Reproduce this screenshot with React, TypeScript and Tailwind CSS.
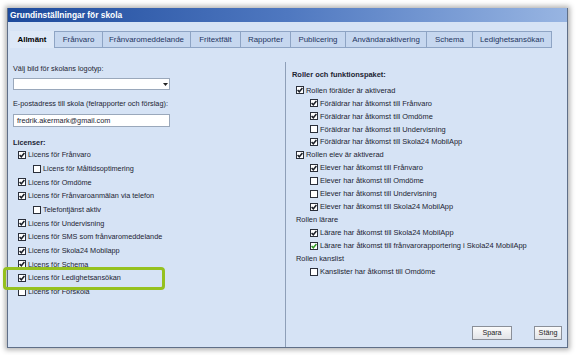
import React from "react";

const Box = ({ checked, green }: { checked: boolean; green?: boolean }) => (
  <span className="inline-flex w-[8px] h-[8px] shrink-0 border border-[#2a2f3a] bg-white items-center justify-center">
    {checked && (
      <svg width="6" height="6" viewBox="0 0 6 6">
        <path d="M0.6 3 L2.3 4.8 L5.4 1" fill="none" stroke={green ? "#2f9a28" : "#1b1f28"} strokeWidth="1.5" />
      </svg>
    )}
  </span>
);

const Row = ({
  label,
  checked,
  green,
  pad,
  h,
  box = true,
}: {
  label: string;
  checked?: boolean;
  green?: boolean;
  pad: string;
  h: string;
  box?: boolean;
}) => (
  <div className={`flex items-center gap-[2px] ${pad} ${h}`}>
    {box && <Box checked={!!checked} green={green} />}
    <span className="whitespace-nowrap leading-none">{label}</span>
  </div>
);

const tabs: [string, number][] = [
  ["Allmänt", 45],
  ["Frånvaro", 48],
  ["Frånvaromeddelande", 88],
  ["Fritextfält", 50],
  ["Rapporter", 50],
  ["Publicering", 55],
  ["Användaraktivering", 81],
  ["Schema", 46],
  ["Ledighetsansökan", 79],
];

export default function App() {
  const L = "h-[13.7px]";
  const R = "h-[12.95px]";
  return (
    <div
      className="relative w-[578px] h-[355px] bg-white overflow-hidden text-[#1c2433]"
      style={{ fontFamily: "'Liberation Sans', Arial, sans-serif" }}
    >
      <div className="ml-[7px] mt-[8px] w-[561px] h-[340px] border-x border-b border-[#5f6f88] bg-[#d6e3f5] flex flex-col shadow-[0_0_5px_2px_rgba(0,0,0,0.3)]">
        <div className="h-[14px] bg-gradient-to-r from-[#1d4a9c] via-[#4f78c0] to-[#98b5e2] flex items-center pl-[2px]">
          <span className="text-white font-bold text-[8.4px] leading-none">Grundinställningar för skola</span>
        </div>
        <div className="flex mt-[9px] ml-[2px] h-[17px] text-[7.9px]">
          {tabs.map(([t, w], i) => (
            <div
              key={t}
              style={{ width: w }}
              className={
                i === 0
                  ? "flex items-center justify-center border-r border-[#8ea4c4] bg-[#dde8f7] font-bold text-black"
                  : "flex items-center justify-center border-r border-y border-[#8ea4c4] bg-[#c6d7ef] text-[#1f3560]"
              }
            >
              {t}
            </div>
          ))}
        </div>
        <div className="flex mt-[14px] flex-1">
          <div className="w-[277px] pl-[5px] pt-[2px] text-[7.3px]">
            <div className="h-[10px] flex items-center leading-none">Välj bild för skolans logotyp:</div>
            <div className="mt-[4px] w-[157px] h-[12px] bg-white border border-[#9aa8bb] flex justify-end">
              <div className="w-[8px] h-full flex items-center justify-center">
                <svg width="5" height="3" viewBox="0 0 5 3">
                  <path d="M0 0 H5 L2.5 3 Z" fill="#222" />
                </svg>
              </div>
            </div>
            <div className="mt-[9px] h-[10px] flex items-center leading-none">
              E-postadress till skola (felrapporter och förslag):
            </div>
            <div className="mt-[5px] w-[157px] h-[13px] bg-white border border-[#9aa8bb] flex items-center pl-[3px] leading-none">
              fredrik.akermark@gmail.com
            </div>
            <div className="mt-[11px] h-[10px] flex items-center font-bold leading-none">Licenser:</div>
            <Row h={L} pad="pl-[5px]" checked label="Licens för Frånvaro" />
            <Row h={L} pad="pl-[20px]" label="Licens för Måltidsoptimering" />
            <Row h={L} pad="pl-[5px]" checked label="Licens för Omdöme" />
            <Row h={L} pad="pl-[5px]" checked label="Licens för Frånvaroanmälan via telefon" />
            <Row h={L} pad="pl-[20px]" label="Telefontjänst aktiv" />
            <Row h={L} pad="pl-[5px]" checked label="Licens för Undervisning" />
            <Row h={L} pad="pl-[5px]" checked label="Licens för SMS som frånvaromeddelande" />
            <Row h={L} pad="pl-[5px]" checked label="Licens för Skola24 Mobilapp" />
            <Row h={L} pad="pl-[5px]" checked label="Licens för Schema" />
            <Row h={L} pad="pl-[5px]" checked label="Licens för Ledighetsansökan" />
            <Row h={L} pad="pl-[5px]" label="Licens för Förskola" />
          </div>
          <div className="flex-1 border-l border-[#8e9fb8] pt-[8px] text-[7.45px] flex flex-col">
            <div className="h-[10px] pl-[6px] flex items-center font-bold leading-none">Roller och funktionspaket:</div>
            <div className="mt-[4px]">
              <Row h={R} pad="pl-[10px]" checked label="Rollen förälder är aktiverad" />
              <Row h={R} pad="pl-[24px]" checked label="Föräldrar har åtkomst till Frånvaro" />
              <Row h={R} pad="pl-[24px]" checked label="Föräldrar har åtkomst till Omdöme" />
              <Row h={R} pad="pl-[24px]" label="Föräldrar har åtkomst till Undervisning" />
              <Row h={R} pad="pl-[24px]" checked label="Föräldrar har åtkomst till Skola24 MobilApp" />
              <Row h={R} pad="pl-[10px]" checked label="Rollen elev är aktiverad" />
              <Row h={R} pad="pl-[24px]" checked label="Elever har åtkomst till Frånvaro" />
              <Row h={R} pad="pl-[24px]" label="Elever har åtkomst till Omdöme" />
              <Row h={R} pad="pl-[24px]" label="Elever har åtkomst till Undervisning" />
              <Row h={R} pad="pl-[24px]" checked label="Elever har åtkomst till Skola24 MobilApp" />
              <Row h={R} pad="pl-[10px]" box={false} label="Rollen lärare" />
              <Row h={R} pad="pl-[24px]" checked label="Lärare har åtkomst till Skola24 MobilApp" />
              <Row h={R} pad="pl-[24px]" checked green label="Lärare har åtkomst till frånvarorapportering i Skola24 MobilApp" />
              <Row h={R} pad="pl-[10px]" box={false} label="Rollen kanslist" />
              <Row h={R} pad="pl-[24px]" label="Kanslister har åtkomst till Omdöme" />
            </div>
            <div className="mt-auto mb-[7px] flex justify-end gap-[22px] pr-[5px] text-[7.2px]">
              <button className="w-[40px] h-[14px] border border-[#8a8f98] bg-gradient-to-b from-[#fbfbfb] to-[#e2e4e8] leading-none text-[#222]">
                Spara
              </button>
              <button className="w-[28px] h-[14px] border border-[#8a8f98] bg-gradient-to-b from-[#fbfbfb] to-[#e2e4e8] leading-none text-[#222]">
                Stäng
              </button>
            </div>
          </div>
        </div>
      </div>
      <div className="absolute left-[3px] top-[267px] w-[162px] h-[23px] border-[3px] border-[#95c11f] rounded-[4px]" />
    </div>
  );
}
